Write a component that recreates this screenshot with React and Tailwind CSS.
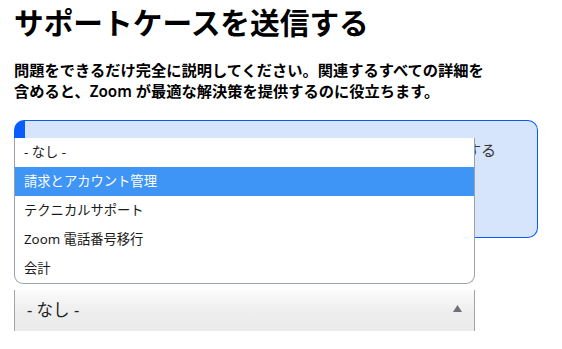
import { Component } from "react";

const options = ["- なし -", "請求とアカウント管理", "テクニカルサポート", "Zoom 電話番号移行", "会計"];

class App extends Component {
    constructor(props) {
        super(props);

        this.state = {
            activeIndex: 1,
            isOpen: true
        };
    }

    renderOptions = () => {
        return options.map((item, index) => {
            const isActive = index === this.state.activeIndex;
            return (
                <li
                    key={item}
                    className={`h-[29px] px-[9px] leading-[29px] text-[13.3px] cursor-default ${isActive ? 'bg-[#3e95f5] text-white' : 'text-[#1a1a1a]'}`}
                    onMouseEnter={() => this.setState({ activeIndex: index })}
                >
                    {item}
                </li>
            );
        });
    }

    render() {
        // DROPDOWN LIST
        let dropdown = null;
        if (this.state.isOpen) {
            dropdown = (
                <ul className="absolute left-0 top-[18px] w-[461px] bg-white border border-t-0 border-[#9aa1aa] rounded-b-[9px] overflow-hidden list-none m-0 p-0 z-10">
                    {this.renderOptions()}
                </ul>
            );
        }

        return (
            <div className="min-h-[349px] bg-white px-[14px] text-black" style={{ fontFamily: '"Noto Sans", "Noto Sans CJK JP", sans-serif' }}>
                <h1 className="pt-[4px] text-[29.7px] leading-[38px] font-bold">サポートケースを送信する</h1>

                <p className="mt-[18px] text-[15.25px] leading-[21px] font-semibold">
                    問題をできるだけ完全に説明してください。関連するすべての詳細を<br />
                    含めると、Zoom が最適な解決策を提供するのに役立ちます。
                </p>

                <div className="relative">
                    {/* NOTICE BOX */}
                    <div className="mt-[18px] h-[118px] w-[524px] rounded-[10px] border border-l-[11px] border-[#0b5cff] bg-[#d6e4fc] pl-[22px] pt-[19px] text-[15px] leading-[21px] text-[#333]">
                        <div className="whitespace-nowrap">フォームに必要事項を入力し、問題のカテゴリを選択して送信する</div>
                    </div>

                    {/* SELECT */}
                    <div
                        className="mt-[52px] flex items-center justify-between w-[461px] h-[41px] border-x border-[#a3a3a3] bg-gradient-to-b from-[#fcfcfc] via-[#eeeeee] to-[#ebebeb] pl-[12px] pr-[12px] cursor-default"
                        onClick={() => this.setState({ isOpen: !this.state.isOpen })}
                    >
                        <span className="text-[16.5px] text-[#222]">{options[0]}</span>
                        <svg width="9" height="7" viewBox="0 0 9 7" className="mb-[5px]">
                            <polygon points="4.5,0 9,7 0,7" fill="#6f6f7a" />
                        </svg>
                    </div>

                    {dropdown}
                </div>
            </div>
        );
    }
}

export default App;
